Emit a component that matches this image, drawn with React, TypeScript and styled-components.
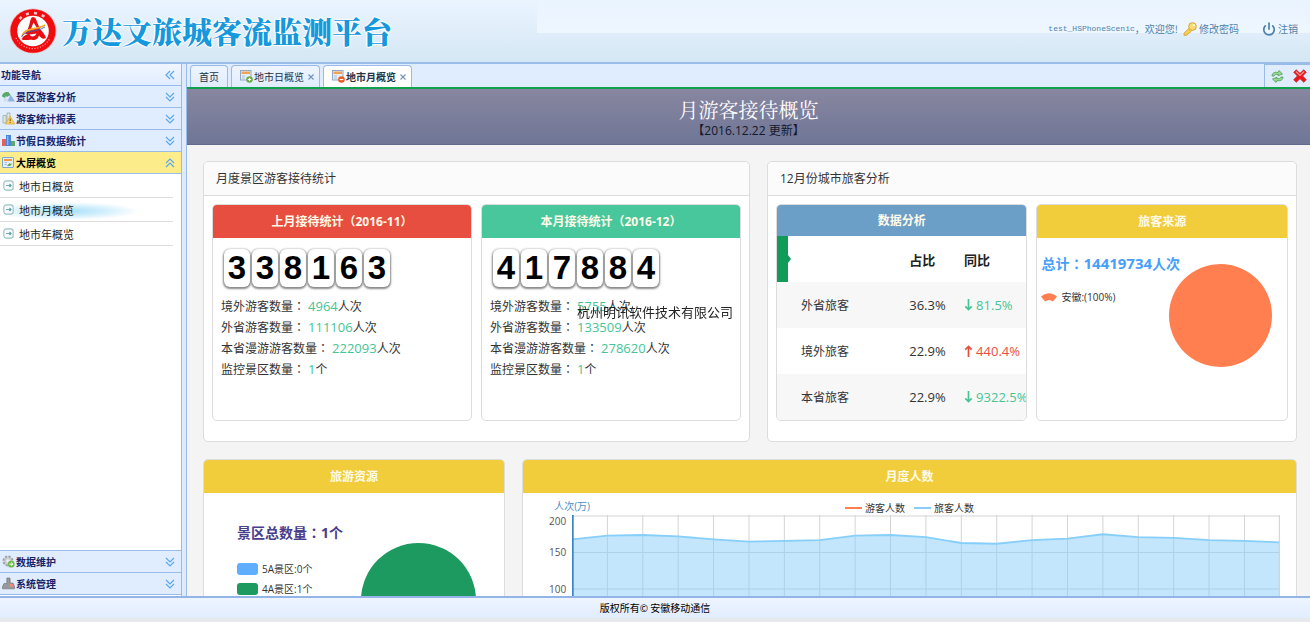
import React from "react";
import styled, { createGlobalStyle, css } from "styled-components";
import { Power } from "lucide-react";

const Global = createGlobalStyle`
  * { box-sizing: border-box; }
  body { margin: 0; background: #e6e9ec; font-family: "Open Sans", "Noto Sans CJK SC", sans-serif; font-size: 12px; color: #333; }
  button { font: inherit; color: inherit; border: 0; background: none; padding: 0; margin: 0; cursor: pointer; }
  a { color: inherit; text-decoration: none; }
  h1, h2, h3, p, ul, dl, dd, dt { margin: 0; padding: 0; font: inherit; list-style: none; }
  svg { display: block; flex: none; }
`;

const Page = styled.div`
  height: 100vh;
  display: flex;
  flex-direction: column;
  overflow: hidden;
`;

/* ---------- top bar ---------- */
const TopBar = styled.header`
  height: 64px;
  flex: none;
  display: flex;
  align-items: center;
  justify-content: space-between;
  padding: 0 12px 0 9px;
  border-bottom: 2px solid #99bce8;
  background:
    linear-gradient(#eaf4ff, #eef6fe) right top / 59% 33px no-repeat,
    linear-gradient(#eaf4ff, #e0eefa 50%, #d4e7f4);
`;
const Brand = styled.div`
  display: flex;
  align-items: center;
  gap: 5px;
`;
const BrandName = styled.h1`
  && { font: 900 30px/42px "Noto Serif CJK SC", "Noto Sans CJK SC", serif; }
  padding-bottom: 2px;
  color: #1698dd;
  white-space: nowrap;
  text-shadow: 1px 0 #fff, -1px 0 #fff, 0 1px #fff, 0 -1px #fff, 0 0 3px #fff;
`;
const UserBar = styled.nav`
  display: flex;
  align-items: center;
  font: 10px/16px "Noto Sans CJK SC", sans-serif;
  color: #4f83ad;
  padding-bottom: 4px;
  white-space: nowrap;
`;
const Account = styled.span`
  font: 8px/16px "Liberation Mono", monospace;
`;
const UserAction = styled.a<{ $gap?: boolean }>`
  display: flex;
  align-items: center;
  gap: 2px;
  margin-left: ${(p) => (p.$gap ? "23px" : "5px")};
`;

/* ---------- frame ---------- */
const Frame = styled.div`
  flex: 1;
  min-height: 0;
  display: flex;
  gap: 4px;
  background: #dfeafc;
  border-bottom: 2px solid #92b4e6;
`;
const Sidebar = styled.aside`
  width: 182px;
  flex: none;
  display: flex;
  flex-direction: column;
  background: #fff;
  border-right: 1px solid #99bbe8;
`;
const barFace = css`
  height: 22px;
  flex: none;
  width: 100%;
  display: flex;
  align-items: center;
  gap: 1px;
  font: bold 10px/20px "Noto Sans CJK SC", sans-serif;
  color: #15246a;
  border-bottom: 1px solid #99bbe8;
`;
const SideTitle = styled.h2`
  && { ${barFace} }
  padding: 0 6px 0 1px;
  justify-content: space-between;
  background: linear-gradient(#f0f6ff, #e0ecff);
`;
const GroupButton = styled.button<{ $open?: boolean }>`
  && { ${barFace} }
  && {
    padding: 0 6px 0 2px;
    background: ${(p) => (p.$open ? "#fdec8a" : "#e0ecff")};
    color: ${(p) => (p.$open ? "#000" : "#15246a")};
  }
`;
const GroupName = styled.span`
  flex: 1;
  text-align: left;
`;
const SubMenu = styled.ul`
  flex: 1;
`;
const SubItem = styled.li`
  height: 24px;
  margin-right: 8px;
  border-bottom: 1px solid #ddd;
`;
const SubLink = styled.a<{ $active?: boolean }>`
  height: 23px;
  margin-left: 3px;
  display: flex;
  align-items: center;
  gap: 5px;
  font: 11px/22px "Noto Sans CJK SC", sans-serif;
  color: #222;
  ${(p) =>
    p.$active &&
    css`
      background: radial-gradient(75px 9px at 62px 13px, #a4def9, #d8f1fd 60%, transparent) no-repeat;
    `}
`;
const SideFoot = styled.div`
  border-top: 1px solid #99bbe8;
  padding-bottom: 1px;
`;

const Main = styled.main`
  flex: 1;
  min-width: 0;
  display: flex;
  flex-direction: column;
  border-left: 1px solid #99bbe8;
`;
const TabStrip = styled.div`
  height: 25px;
  flex: none;
  display: flex;
  justify-content: space-between;
  background: #e0ecff;
  border-bottom: 2px solid #12a04f;
`;
const Tabs = styled.div`
  display: flex;
  gap: 3px;
  padding: 1px 0 0 3px;
`;
const Tab = styled.div<{ $active?: boolean; $plain?: boolean }>`
  display: flex;
  align-items: center;
  gap: 4px;
  padding: ${(p) => (p.$plain ? "0 8px" : "0 5px 0 8px")};
  border: 1px solid #99bbe8;
  border-bottom: 0;
  border-radius: 4px 4px 0 0;
  font: 10px/20px "Noto Sans CJK SC", sans-serif;
  font-weight: ${(p) => (p.$active ? "bold" : "normal")};
  color: #234;
  background: ${(p) => (p.$active ? "#fff" : "linear-gradient(#eff5ff, #e0ecff)")};
`;
const TabLabel = styled.button`
  display: flex;
  align-items: center;
  gap: 1px;
`;
const TabClose = styled.button`
  color: #6f93bd;
`;
const TabTools = styled.div`
  width: 46px;
  display: flex;
  align-items: center;
  gap: 9px;
  padding-left: 6px;
  border: solid #99bbe8;
  border-width: 1px 0 0 1px;
`;

/* ---------- dashboard ---------- */
const Scroll = styled.div`
  flex: 1;
  min-height: 0;
  overflow-y: auto;
  scrollbar-width: none;
  background: #f4f4f4;
`;
const Banner = styled.div`
  height: 56px;
  padding-top: 6px;
  text-align: center;
  background: linear-gradient(#8886a0, #6f7696);
  border-bottom: 1px solid #636a8c;
`;
const BannerTitle = styled.h2`
  && { font: 20px/30px "Noto Serif CJK SC", "Noto Sans CJK SC", serif; }
  color: #fff;
`;
const BannerDate = styled.p`
  && { line-height: 12px; }
  color: #14182c;
`;
const Rows = styled.div`
  display: flex;
  flex-direction: column;
  gap: 17px;
  padding: 16px 13px 16px 16px;
`;
const Row = styled.div`
  display: flex;
  gap: 17px;
`;
const Panel = styled.section<{ $grow: number }>`
  flex: ${(p) => p.$grow} 1 0;
  min-width: 0;
  background: #fff;
  border: 1px solid #dcdcdc;
  border-radius: 5px;
`;
const PanelTitle = styled.h3`
  && { line-height: 33px; }
  padding-left: 12px;
  background: #fbfbfb;
  border-bottom: 1px solid #dcdcdc;
  border-radius: 5px 5px 0 0;
`;
const PanelBody = styled.div`
  display: flex;
  gap: 9px;
  padding: 8px 8px 20px;
`;
const Card = styled.section<{ $grow?: number; $height?: number }>`
  flex: ${(p) => p.$grow ?? 1} 1 0;
  min-width: 0;
  min-height: ${(p) => p.$height ?? 217}px;
  background: #fff;
  border: 1px solid #dcdcdc;
  border-radius: 5px;
  overflow: hidden;
`;
const CardTitle = styled.h3<{ $bg: string; $short?: boolean }>`
  && {
    font-weight: bold;
    line-height: ${(p) => (p.$short ? "31px" : "33px")};
  }
  text-align: center;
  color: #fffbe8;
  background: ${(p) => p.$bg};
`;
const CountBody = styled.div`
  padding: 11px 8px;
`;
const Digits = styled.div`
  display: flex;
  gap: 2px;
  padding-left: 3px;
  margin-bottom: 9px;
`;
const Digit = styled.span`
  width: 26px;
  height: 38px;
  border-radius: 6px;
  text-align: center;
  font: bold 33px/38px "Liberation Sans", sans-serif;
  color: #000;
  background: #fff;
  box-shadow: 0 1px 2px 1px #888;
`;
const Stat = styled.div`
  height: 21px;
  display: flex;
  align-items: baseline;
  white-space: nowrap;
`;
const StatName = styled.dt`
  && { line-height: 20px; }
  margin-right: 3px;
`;
const StatValue = styled.dd`
  && { line-height: 20px; }
`;
const Num = styled.span`
  font-size: 13px;
  color: #45c596;
`;
/* full-width colon set in the middle of its square */
const MidColon = styled.span`
  font-family: "Noto Sans CJK TC", sans-serif;
`;

const Table = styled.table`
  width: 100%;
  table-layout: fixed;
  border-collapse: collapse;
  white-space: nowrap;
`;
const HeadCell = styled.th<{ $w: string }>`
  width: ${(p) => p.$w};
  height: 46px;
  padding: 0;
  text-align: left;
  font-size: 13px;
  color: #222;
`;
const Marker = styled.svg`
  width: 14px;
  height: 46px;
`;
const BodyRow = styled.tr<{ $shade?: boolean }>`
  height: 46px;
  background: ${(p) => (p.$shade ? "#f7f7f7" : "#fff")};
`;
const NameCell = styled.td`
  padding: 0 0 0 24px;
`;
const NumCell = styled.td<{ $tone?: string }>`
  padding: 0;
  font-size: 13px;
  color: ${(p) => p.$tone ?? "#333"};
`;
const Trend = styled.span`
  display: flex;
  align-items: center;
  gap: 3px;
`;

const PieBody = styled.div<{ $left: number; $right: number; $top: number }>`
  display: flex;
  padding: 0 ${(p) => p.$right}px 0 ${(p) => p.$left}px;
  & > svg { margin-top: ${(p) => p.$top}px; }
`;
const PieInfo = styled.div<{ $top: number }>`
  flex: 1;
  min-width: 0;
  padding-top: ${(p) => p.$top}px;
  white-space: nowrap;
`;
const Total = styled.p<{ $tone: string; $gap: number }>`
  && {
    font-weight: bold;
    font-size: 14px;
    line-height: 24px;
    margin-bottom: ${(p) => p.$gap}px;
  }
  color: ${(p) => p.$tone};
`;
const TotalNum = styled.span`
  font-size: 15px;
`;
const Key = styled.p`
  display: flex;
  align-items: center;
  gap: 4px;
  && { font-size: 10px; line-height: 20px; }
`;
const Swatch = styled.i`
  width: 21px;
  height: 12px;
  border-radius: 3px;
  background: ${(p) => p.color};
`;

const ChartHead = styled.div`
  height: 22px;
  display: grid;
  grid-template-columns: 1fr auto 1fr;
  padding: 0 31px;
  font-size: 10px;
`;
const AxisName = styled.span`
  line-height: 26px;
  color: #4a8fc4;
`;
const Legend = styled.div`
  display: flex;
  gap: 9px;
  line-height: 30px;
`;
const LegendItem = styled.span`
  display: flex;
  align-items: center;
  gap: 3px;
`;
const LegendLine = styled.i`
  width: 17px;
  height: 2px;
  background: ${(p) => p.color};
`;
const ChartArea = styled.div`
  display: grid;
  grid-template-columns: 49px 1fr;
  padding-right: 16px;
`;
const Axis = styled.div`
  display: flex;
  flex-direction: column;
  align-items: flex-end;
  gap: 25px;
  padding-right: 6px;
  font-size: 10px;
  line-height: 12px;
  color: #555;
  /* the top label hangs below its grid line, the others are centred on theirs */
  & > :first-child { margin-bottom: -6px; }
`;
const Plot = styled.svg`
  width: 100%;
  height: 148px;
`;

const Footer = styled.footer`
  height: 24px;
  flex: none;
  text-align: center;
  font: 10px/20px "Noto Sans CJK SC", sans-serif;
  color: #000;
  border-bottom: 4px solid #e6e9ec;
  background: linear-gradient(#eef5ff, #e0ecff);
`;
const Watermark = styled.p`
  position: fixed;
  top: 50%;
  left: 50%;
  transform: translate(-50%, -50%);
  && { font-size: 13px; }
  color: #222;
  white-space: nowrap;
  pointer-events: none;
`;

/* ---------- drawings ---------- */
const Logo = () => (
  <svg width="48" height="46" viewBox="0 0 48 46" aria-hidden="true">
    <ellipse cx="24" cy="23" rx="23.5" ry="22.5" fill="#f5b0b0" />
    <ellipse cx="24" cy="23" rx="22.6" ry="21.8" fill="#f00d10" />
    <ellipse cx="24" cy="23" rx="15.8" ry="15.2" fill="#fff" />
    <path d="M10.5 11 A18.6 18.2 0 0 1 38 11" fill="none" stroke="#fff" strokeWidth="2.6" strokeDasharray="3 5" opacity=".75" />
    <path d="M7 30 A18.8 18.4 0 0 0 41 30" fill="none" stroke="#fff" strokeWidth="1.2" strokeDasharray="1.2 1.6" opacity=".6" />
    <path d="M24 9 C26.5 9 27.5 12 28.5 15 L31 21 C34 24 36 27 37 30 C34 32 32 30 30 27.5 C29 31 26 32.5 24 32 C20 31 17 33 12.5 31.5 C13.5 28.5 16 27 19 26.5 L16 26 C18 23 19.5 20 20.5 16 C21.5 12 22 9 24 9 Z M24.5 14.5 L21.5 22 L28 20 Z M20.5 26.5 C22 29.5 26 29 27.5 25.5 Z" fill="#e80f14" fillRule="evenodd" />
    <path d="M13 28 C16 19 26 23 36 17" fill="none" stroke="#f6a821" strokeWidth="1.8" />
    <path d="M12.5 29 C17 21 26 25 36 19" fill="none" stroke="#3a62c4" strokeWidth=".9" />
  </svg>
);

const chevrons = {
  left: "M5 1 L1 5 L5 9 M9 1 L5 5 L9 9",
  down: "M1 1 L5 5 L9 1 M1 5 L5 9 L9 5",
  up: "M1 5 L5 1 L9 5 M1 9 L5 5 L9 9",
};
const Chevrons = ({ dir }: { dir: keyof typeof chevrons }) => (
  <svg width="10" height="10" viewBox="0 0 10 10" fill="none" stroke="#5ba8ea" strokeWidth="1.2" aria-hidden="true">
    <path d={chevrons[dir]} />
  </svg>
);

const Icon = ({ children, size = 13 }: { children: React.ReactNode; size?: number }) => (
  <svg width={size} height={size} viewBox="0 0 13 13" aria-hidden="true">{children}</svg>
);
const icons = {
  scenic: (
    <Icon>
      <path d="M0 6.5 C0 3.5 3 1.5 6.5 2 L8.5 5 L5 7 L4 6 L3 8 Z" fill="#5aa86a" />
      <path d="M5.5 11.5 L8.5 4.5 L13 11.5 Z" fill="#8fb3e2" />
      <path d="M1 9.5 L4 7.5 L7 11.5 H2 Z" fill="#cfdff0" />
    </Icon>
  ),
  report: (
    <Icon>
      <path d="M1 3.5 H4 V11 H1 Z M5 1 H8 V11 H5 Z" fill="#e3e8dc" stroke="#93a493" strokeWidth=".7" />
      <path d="M8.2 4 L12.7 12 H3.6 Z" fill="#fbd667" stroke="#d9a33c" strokeWidth=".7" />
      <path d="M8.2 6.5 V9.3 M8.2 10 V11" stroke="#7c5511" />
    </Icon>
  ),
  bars: (
    <Icon>
      <path d="M0 5 H4 V12 H0 Z" fill="#e4605c" />
      <path d="M4 1 H9 V12 H4 Z" fill="#4a86d8" />
      <path d="M5 2 H6.3 V11 H5 Z" fill="#8db8ee" />
      <path d="M9 7 H13 V12 H9 Z" fill="#5fa868" />
    </Icon>
  ),
  screen: (
    <Icon>
      <rect x=".5" y="1.5" width="11" height="10" rx=".5" fill="#e6eff8" stroke="#7fa4d0" />
      <path d="M2 3 H10 V5 H2 Z" fill="#f09a3e" />
      <path d="M2.5 6.5 H5 M2.5 8.5 H5" stroke="#a9bfd8" />
      <path d="M5 10 L7.5 7 L8.5 8 L9.5 7 V9 L7.5 10 Z" fill="#5aaa55" />
    </Icon>
  ),
  gear: (
    <Icon>
      <circle cx="6" cy="6" r="4.6" fill="#c9cdcf" stroke="#9da3a6" strokeWidth="1.8" strokeDasharray="2.2 1.4" />
      <circle cx="6" cy="6" r="1.7" fill="#eef2f4" />
      <circle cx="9.2" cy="9.2" r="3.4" fill="#6fbb4c" />
      <path d="M7.4 9.2 H10.6 M9.2 7.6 L10.9 9.2 L9.2 10.8" stroke="#fff" fill="none" />
    </Icon>
  ),
  stamp: (
    <Icon>
      <path d="M4.8 1 H8 L8.2 6 H11 L12.5 9.5 V11.8 H.5 V9.5 L2 6.5 H4.8 Z" fill="#98989b" stroke="#6d6d70" strokeWidth=".6" />
      <circle cx="9.3" cy="8.2" r="1.8" fill="#ee8a84" />
    </Icon>
  ),
  arrow: (
    <Icon size={11}>
      <rect x="1" y="1" width="11" height="11" rx="2.8" fill="#f7fbfb" stroke="#9cc0c6" strokeWidth="1.3" />
      <path d="M3.5 6.5 H8 V4.6 L9.8 6.5 L8 8.4 V6.5" fill="#5a9fa6" stroke="#5a9fa6" strokeWidth="1" />
    </Icon>
  ),
  key: (
    <Icon size={14}>
      <path d="M6.5 5 L1 10.3 V12.3 H3.6 L4.5 10.8 L6 10.3 L8.5 7.5" fill="#f7cf55" stroke="#d79c2b" strokeWidth=".8" />
      <circle cx="8.8" cy="4.2" r="3.6" fill="#fadb70" stroke="#d79c2b" strokeWidth=".8" />
      <circle cx="10" cy="3" r="1" fill="#fff" />
    </Icon>
  ),
  refresh: (
    <Icon>
      <path d="M1 6 C1 3 4 1.5 7 2.5 L8 .6 L11.5 4 L7 5.8 L7.4 4.6 C5 4 3.5 4.6 3 6 Z" fill="#9ad88e" stroke="#4b9a55" strokeWidth=".8" />
      <path d="M12 7 C12 10 9 11.5 6 10.5 L5 12.4 L1.5 9 L6 7.2 L5.6 8.4 C8 9 9.5 8.4 10 7 Z" fill="#9ad88e" stroke="#4b9a55" strokeWidth=".8" />
    </Icon>
  ),
  cross: (
    <Icon size={14}>
      <path d="M3 0.7 L6.5 4 L10 .7 L12.4 3 L9 6.5 L12.4 10 L10 12.4 L6.5 9 L3 12.4 L.6 10 L4 6.5 L.6 3 Z" fill="#e6191c" stroke="#c81a1e" strokeWidth=".6" strokeLinejoin="round" />
      <path d="M2.6 2.4 L6.5 6 L10.4 2.4" fill="none" stroke="#f5938d" strokeWidth="1.2" />
    </Icon>
  ),
};
const PageIcon = ({ removed }: { removed?: boolean }) => (
  <Icon>
    <rect x=".5" y=".5" width="10.5" height="9.5" fill="#e8eef6" stroke="#93a8c2" />
    <path d="M1.5 1.5 H10 V4 H1.5 Z" fill="#f3a255" />
    <path d="M2 6 H5 M2 8 H5" stroke="#a9bfd8" />
    <circle cx="9.5" cy="9.5" r="3.3" fill={removed ? "#ea5b22" : "#6fae4c"} />
    <path d={removed ? "M7.7 9.5 H11.3" : "M7.9 9.5 H11.1 M9.5 7.9 V11.1"} stroke="#fff" strokeWidth="1.2" />
  </Icon>
);
const CloseMark = () => (
  <svg width="6" height="6" viewBox="0 0 6 6" aria-hidden="true">
    <path d="M.5 .5 L5.5 5.5 M5.5 .5 L.5 5.5" stroke="currentColor" strokeWidth="1.1" />
  </svg>
);
const TrendArrow = ({ up }: { up?: boolean }) => (
  <svg width="9" height="12" viewBox="0 0 9 12" fill="none" stroke="currentColor" strokeWidth="1.7" aria-hidden="true">
    {up ? <path d="M4.5 12 V2 M1.3 4.6 L4.5 1.4 L7.7 4.6" /> : <path d="M4.5 0 V10 M1.3 7.4 L4.5 10.6 L7.7 7.4" />}
  </svg>
);
const Pie = ({ size, color }: { size: number; color: string }) => (
  <svg width={size} height={size} viewBox="0 0 100 100" role="img">
    <circle cx="50" cy="50" r="50" fill={color} />
  </svg>
);

/* ---------- data ---------- */
const topGroups: [string, React.ReactNode][] = [
  ["景区游客分析", icons.scenic],
  ["游客统计报表", icons.report],
  ["节假日数据统计", icons.bars],
];
const bottomGroups: [string, React.ReactNode][] = [
  ["数据维护", icons.gear],
  ["系统管理", icons.stamp],
];
const pages = ["地市日概览", "地市月概览", "地市年概览"];
const months = [
  { title: "上月接待统计（2016-11）", bg: "#e84e40", total: "338163", counts: ["4964", "111106", "222093", "1"] },
  { title: "本月接待统计（2016-12）", bg: "#48c79c", total: "417884", counts: ["5755", "133509", "278620", "1"] },
];
const countNames = ["境外游客数量", "外省游客数量", "本省漫游游客数量", "监控景区数量"];
const shares = [
  { name: "外省旅客", share: "36.3%", trend: "81.5%", up: false },
  { name: "境外旅客", share: "22.9%", trend: "440.4%", up: true },
  { name: "本省旅客", share: "22.9%", trend: "9322.5%", up: false },
];
/* monthly visitors in units of ten thousand */
const series = [168, 173, 174, 172, 168, 165, 166, 167, 173, 174, 171, 163, 162, 167, 169, 175, 171, 170, 167, 166, 164];

const AreaPlot = () => {
  const step = 708 / (series.length - 1);
  const y = (v: number) => 1 + (200 - v) * 0.73;
  const line = series.map((v, i) => `${i * step},${y(v)}`).join(" L");
  return (
    <Plot viewBox="0 0 708 148" preserveAspectRatio="none">
      <g stroke="#d4d4d4" strokeWidth="1">
        {series.map((_, i) => <path key={i} d={`M${i * step} 0 V148`} />)}
        {[200, 150, 100, 50].map((v) => <path key={v} d={`M0 ${y(v)} H708`} />)}
      </g>
      <path d={`M${line} L708,148 L0,148 Z`} fill="#87cefa" fillOpacity=".5" />
      <path d={`M${line}`} fill="none" stroke="#87cefa" strokeWidth="1.8" />
      <path d="M.8 0 V148" stroke="#3b86c2" strokeWidth="1.8" />
      <path d="M707.5 0 V148" stroke="#d4d4d4" />
    </Plot>
  );
};

export default function App() {
  return (
    <Page>
      <Global />
      <TopBar>
        <Brand>
          <Logo />
          <BrandName>万达文旅城客流监测平台</BrandName>
        </Brand>
        <UserBar>
          <Account>test_HSPhoneScenic</Account>
          <span>，欢迎您!</span>
          <UserAction href="#password">{icons.key}修改密码</UserAction>
          <UserAction href="#logout" $gap><Power size={14} strokeWidth={3} />注销</UserAction>
        </UserBar>
      </TopBar>

      <Frame>
        <Sidebar>
          <SideTitle>功能导航<Chevrons dir="left" /></SideTitle>
          {topGroups.map(([name, icon]) => (
            <GroupButton key={name}>{icon}<GroupName>{name}</GroupName><Chevrons dir="down" /></GroupButton>
          ))}
          <GroupButton $open>{icons.screen}<GroupName>大屏概览</GroupName><Chevrons dir="up" /></GroupButton>
          <SubMenu>
            {pages.map((name, i) => (
              <SubItem key={name}>
                <SubLink href={`#page-${i}`} $active={i === 1}>{icons.arrow}{name}</SubLink>
              </SubItem>
            ))}
          </SubMenu>
          <SideFoot>
            {bottomGroups.map(([name, icon]) => (
              <GroupButton key={name}>{icon}<GroupName>{name}</GroupName><Chevrons dir="down" /></GroupButton>
            ))}
          </SideFoot>
        </Sidebar>

        <Main>
          <TabStrip>
            <Tabs>
              <Tab $plain><TabLabel>首页</TabLabel></Tab>
              <Tab>
                <TabLabel><PageIcon />地市日概览</TabLabel>
                <TabClose aria-label="关闭"><CloseMark /></TabClose>
              </Tab>
              <Tab $active>
                <TabLabel><PageIcon removed />地市月概览</TabLabel>
                <TabClose aria-label="关闭"><CloseMark /></TabClose>
              </Tab>
            </Tabs>
            <TabTools>
              <button aria-label="刷新">{icons.refresh}</button>
              <button aria-label="全部关闭">{icons.cross}</button>
            </TabTools>
          </TabStrip>

          <Scroll>
            <Banner>
              <BannerTitle>月游客接待概览</BannerTitle>
              <BannerDate>【2016.12.22 更新】</BannerDate>
            </Banner>
            <Rows>
              <Row>
                <Panel $grow={547}>
                  <PanelTitle>月度景区游客接待统计</PanelTitle>
                  <PanelBody>
                    {months.map((m) => (
                      <Card key={m.title}>
                        <CardTitle $bg={m.bg}>{m.title}</CardTitle>
                        <CountBody>
                          <Digits>{m.total.split("").map((d, i) => <Digit key={i}>{d}</Digit>)}</Digits>
                          <dl>
                            {countNames.map((name, i) => (
                              <Stat key={name}>
                                <StatName>{name}<MidColon>：</MidColon></StatName>
                                <StatValue><Num>{m.counts[i]}</Num>{i === 3 ? "个" : "人次"}</StatValue>
                              </Stat>
                            ))}
                          </dl>
                        </CountBody>
                      </Card>
                    ))}
                  </PanelBody>
                </Panel>
                <Panel $grow={530}>
                  <PanelTitle>12月份城市旅客分析</PanelTitle>
                  <PanelBody>
                    <Card>
                      <CardTitle $bg="#6b9fc8" $short>数据分析</CardTitle>
                      <Table>
                        <thead>
                          <tr>
                            <HeadCell $w="53%" aria-label="类别">
                              <Marker viewBox="0 0 14 46"><path d="M0 0 H11 V19 L14 23 L11 27 V46 H0 Z" fill="#129b58" /></Marker>
                            </HeadCell>
                            <HeadCell $w="22%">占比</HeadCell>
                            <HeadCell $w="25%">同比</HeadCell>
                          </tr>
                        </thead>
                        <tbody>
                          {shares.map((s, i) => (
                            <BodyRow key={s.name} $shade={i % 2 === 0}>
                              <NameCell>{s.name}</NameCell>
                              <NumCell>{s.share}</NumCell>
                              <NumCell $tone={s.up ? "#e84e40" : "#45c596"}>
                                <Trend><TrendArrow up={s.up} />{s.trend}</Trend>
                              </NumCell>
                            </BodyRow>
                          ))}
                        </tbody>
                      </Table>
                    </Card>
                    <Card>
                      <CardTitle $bg="#f1cd3b">旅客来源</CardTitle>
                      <PieBody $left={4} $right={15} $top={26}>
                        <PieInfo $top={13}>
                          <Total $tone="#479ffb" $gap={11}>
                            总计<MidColon>：</MidColon><TotalNum>14419734</TotalNum>人次
                          </Total>
                          <Key>
                            <svg width="16" height="9" viewBox="0 0 16 9" aria-hidden="true">
                              <path d="M0 3.5 Q8 -3 16 3.5 L12 8.5 Q8 5.5 4 8.5 Z" fill="#ff7f50" />
                            </svg>
                            安徽:(100%)
                          </Key>
                        </PieInfo>
                        <Pie size={103} color="#ff7f50" />
                      </PieBody>
                    </Card>
                  </PanelBody>
                </Panel>
              </Row>
              <Row>
                <Card $grow={301} $height={260}>
                  <CardTitle $bg="#f1cd3b">旅游资源</CardTitle>
                  <PieBody $left={33} $right={28} $top={50}>
                    <PieInfo $top={27}>
                      <Total $tone="#483d8b" $gap={14}>景区总数量<MidColon>：</MidColon>1个</Total>
                      <Key><Swatch color="#60aeff" />5A景区:0个</Key>
                      <Key><Swatch color="#1c9a60" />4A景区:1个</Key>
                    </PieInfo>
                    <Pie size={115} color="#1c9a60" />
                  </PieBody>
                </Card>
                <Card $grow={775} $height={260}>
                  <CardTitle $bg="#f1cd3b">月度人数</CardTitle>
                  <ChartHead>
                    <AxisName>人次(万)</AxisName>
                    <Legend>
                      <LegendItem><LegendLine color="#ff7f50" />游客人数</LegendItem>
                      <LegendItem><LegendLine color="#87cefa" />旅客人数</LegendItem>
                    </Legend>
                  </ChartHead>
                  <ChartArea>
                    <Axis><span>200</span><span>150</span><span>100</span></Axis>
                    <AreaPlot />
                  </ChartArea>
                </Card>
              </Row>
            </Rows>
          </Scroll>
        </Main>
      </Frame>

      <Footer>版权所有© 安徽移动通信</Footer>
      <Watermark>杭州明讯软件技术有限公司</Watermark>
    </Page>
  );
}
